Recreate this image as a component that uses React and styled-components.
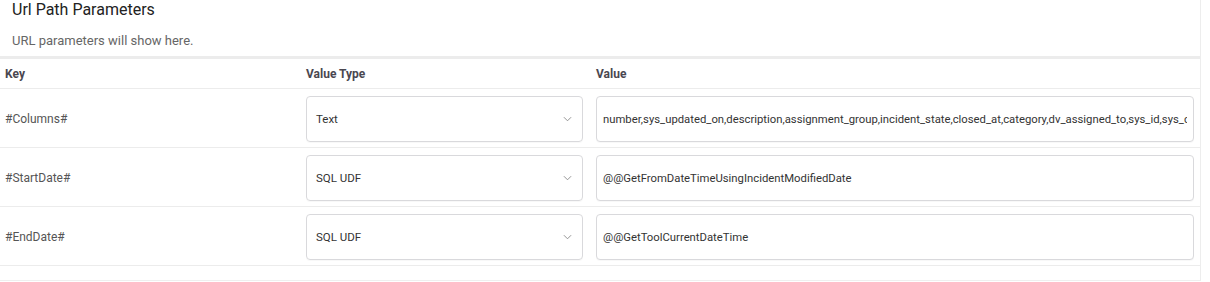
import React from "react";
import styled, { createGlobalStyle } from "styled-components";

const GlobalStyle = createGlobalStyle`
  html, body {
    margin: 0;
    padding: 0;
    background: #fff;
    font-family: Roboto, "Liberation Sans", sans-serif;
  }
`;

const params = [
  {
    key: "#Columns#",
    type: "Text",
    value:
      "number,sys_updated_on,description,assignment_group,incident_state,closed_at,category,dv_assigned_to,sys_id,sys_created_on,priority",
  },
  {
    key: "#StartDate#",
    type: "SQL UDF",
    value: "@@GetFromDateTimeUsingIncidentModifiedDate",
  },
  { key: "#EndDate#", type: "SQL UDF", value: "@@GetToolCurrentDateTime" },
];

export default function App() {
  return (
    <>
      <GlobalStyle />
      <Panel>
        <Heading>
          <Title>Url Path Parameters</Title>
          <Subtitle>URL parameters will show here.</Subtitle>
        </Heading>
        <TableWrap>
          <Row header>
            <HeadCell>Key</HeadCell>
            <HeadCell>Value Type</HeadCell>
            <HeadCell>Value</HeadCell>
          </Row>
          {params.map((p) => (
            <Row key={p.key}>
              <KeyCell>{p.key}</KeyCell>
              <FieldCell>
                <Select>
                  <span>{p.type}</span>
                  <Chevron viewBox="0 0 10 6">
                    <path d="M1 1l4 4 4-4" />
                  </Chevron>
                </Select>
              </FieldCell>
              <FieldCell>
                <Input readOnly value={p.value} />
              </FieldCell>
            </Row>
          ))}
        </TableWrap>
      </Panel>
    </>
  );
}

const Panel = styled.div`
  width: 1200px;
  border-right: 1px solid #ededed;
  background: #fff;
`;

const Heading = styled.div`
  padding: 0 12px;
  height: 56px;
  display: flex;
  flex-direction: column;
`;

const Title = styled.div`
  font-size: 16px;
  color: #222;
  line-height: 20px;
`;

const Subtitle = styled.div`
  font-size: 13px;
  color: #666;
  margin-top: 13px;
  line-height: 16px;
`;

const TableWrap = styled.div`
  border-top: 3px solid #ececec;
  border-bottom: 1px solid #efefef;
  padding-bottom: 14px;
`;

const Row = styled.div`
  display: grid;
  grid-template-columns: 300px 290px 1fr;
  align-items: center;
  height: ${(p) => (p.header ? "29px" : "58px")};
  border-bottom: 1px solid #ececec;
`;

const HeadCell = styled.div`
  font-size: 12px;
  font-weight: 700;
  color: #4a4750;
  padding-left: 6px;
  &:first-child {
    padding-left: 5px;
  }
`;

const KeyCell = styled.div`
  font-size: 12px;
  color: #555;
  padding-left: 5px;
  padding-top: 1px;
`;

const FieldCell = styled.div`
  padding: 2px 6px 0 6px;
`;

const Select = styled.div`
  height: 44px;
  border: 1px solid #d9d9dc;
  border-radius: 4px;
  display: flex;
  align-items: center;
  justify-content: space-between;
  padding: 0 10px 0 9px;
  font-size: 11.5px;
  color: #333;
  margin-right: 1px;
  box-shadow: 0 1px 1px rgba(0, 0, 0, 0.03);
`;

const Chevron = styled.svg`
  width: 9px;
  height: 6px;
  fill: none;
  stroke: #888;
  stroke-width: 1;
`;

const Input = styled.input`
  box-sizing: border-box;
  width: 100%;
  height: 46px;
  border: 1px solid #d9d9dc;
  border-radius: 4px;
  padding: 0 6px;
  font-family: Roboto, "Liberation Sans", sans-serif;
  font-size: 11.3px;
  color: #333;
  outline: none;
  box-shadow: 0 1px 1px rgba(0, 0, 0, 0.03);
`;
